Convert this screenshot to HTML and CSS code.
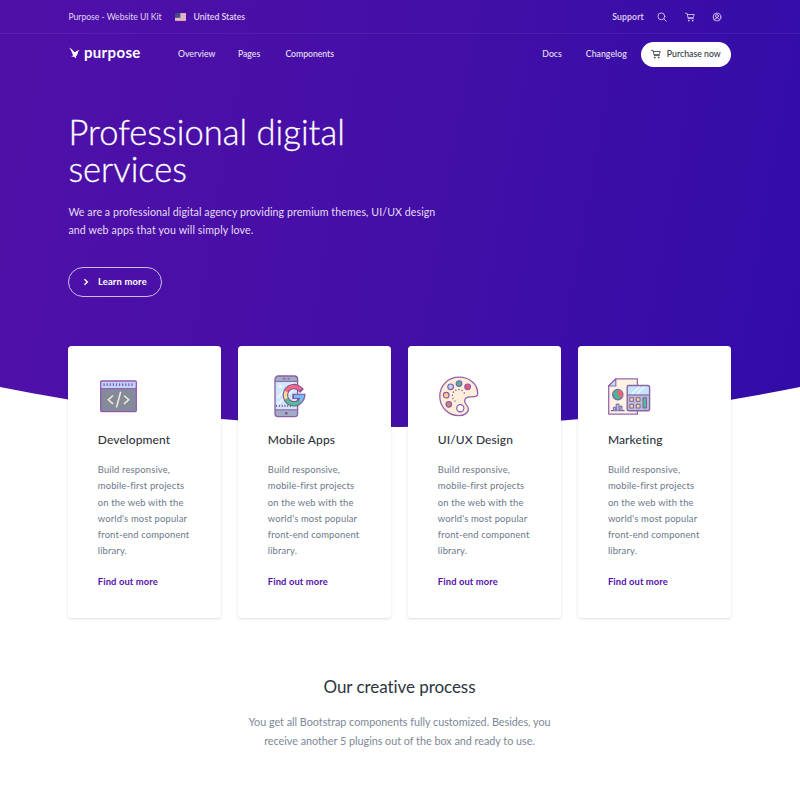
FILE: index.html
```html
<!DOCTYPE html>
<html lang="en">
<head>
<meta charset="utf-8">
<title>Purpose - Website UI Kit</title>
<link rel="stylesheet" href="styles.css">
</head>
<body>
<svg class="defs" aria-hidden="true">
  <symbol id="cart" viewBox="0 0 20 20"><path d="M1 2.6h3.2l2.3 10.6h10.7M4.8 5h13.7l-2.1 6.2L6.2 11.4" fill="none" stroke="currentColor" stroke-width="1.6" stroke-linecap="round" stroke-linejoin="round"/><circle cx="7.6" cy="17" r="1.7" fill="currentColor" stroke="none"/><circle cx="15.4" cy="17" r="1.7" fill="currentColor" stroke="none"/></symbol>
</svg>
<div class="hero">
  <svg class="curve" viewBox="0 0 800 60" preserveAspectRatio="none"><path d="M0 17Q400 97 800 17V60H0Z" fill="#fff"/></svg>
  <div class="topbar">
    <div class="container bar">
      <span class="tagline">Purpose - Website UI Kit</span>
      <svg class="flag" viewBox="0 0 11 8"><path fill="#d9a3b4" d="M0 0h11v8H0z"/><path d="M0 1.7h11M0 3.9h11M0 6.1h11" stroke="#f0d4dc" stroke-width=".7"/><path fill="#34477c" d="M0 0h5.3v4.7H0z"/><path d="M.8 1.2h4M.8 2.4h4M.8 3.6h4" stroke="#8190b4" stroke-width=".4" stroke-dasharray=".5 .6"/></svg>
      <span class="country">United States</span>
      <span class="support">Support</span>
      <svg class="ico search" viewBox="0 0 20 20"><circle cx="8.7" cy="8.7" r="6.8"/><path d="M13.7 13.7l4.8 4.8"/></svg>
      <svg class="ico cart"><use href="#cart"/></svg>
      <svg class="ico user" viewBox="0 0 20 20"><circle cx="10" cy="10" r="7.8"/><circle cx="10" cy="8" r="3"/><path d="M5 15.5c1-3 2.5-3.6 5-3.6s4 .6 5 3.6"/></svg>
    </div>
  </div>
  <div class="container nav">
    <svg class="mark" viewBox="0 0 11 12"><path fill="#fff" d="M0 .4C1.8 1.2 3.8 2.8 5.2 4.9L6.4 5.1C7.4 3.9 8.7 3.1 10.8 3C9.5 3.8 9.1 4.7 8.9 5.8C8.5 7.4 8.1 8.3 7 9.2L7.1 11.4L5.1 9.8L2.2 9.6L4.2 8.2C3.4 6.6 2.2 2.8 0 .4Z"/></svg>
    <span class="brand">purpose</span>
    <span class="overview">Overview</span><span class="pages">Pages</span><span class="components">Components</span>
    <span class="docs">Docs</span><span class="changelog">Changelog</span>
    <span class="purchase"><svg class="ico"><use href="#cart"/></svg>Purchase now</span>
  </div>
  <div class="container intro">
    <h1>Professional digital<br>services</h1>
    <p>We are a professional digital agency providing premium themes, UI/UX design<br><span class="wider">and web apps that you will simply love.</span></p>
    <a class="learn"><svg viewBox="0 0 6 8"><path d="M1.4 1.2L4.4 4L1.4 6.8"/></svg>Learn more</a>
  </div>
</div>
<div class="container cards">
  <div class="card">
    <svg class="art" viewBox="0 0 44 44"><rect x="2.7" y="7" width="35.6" height="30.6" rx="1" fill="#838b9b"/><path d="M2.7 7h35.6v7.3H2.7z" fill="#c4d3fb"/><path d="M5.5 10.6h31" stroke="#7b5bb0" stroke-width="2.6" stroke-dasharray="1.2 1.9"/><path d="M2.7 14.5h35.6" stroke="#9760b4" stroke-width="1.1"/><rect x="2.7" y="7" width="35.6" height="30.6" rx="1" fill="none" stroke="#9158b0" stroke-width="1.3"/><path d="M15 21.5l-4.7 4.2 4.7 4.2M26 21.5l4.7 4.2-4.7 4.2M22.7 17.8l-4.2 15.6" fill="none" stroke="#fbead6" stroke-width="1.5"/></svg>
    <h3>Development</h3>
    <p>Build responsive,<br>mobile-first projects<br>on the web with the<br>world's most popular<br>front-end component<br>library.</p><a>Find out more</a>
  </div>
  <div class="card">
    <svg class="art" viewBox="0 0 44 44"><rect x="7" y="2" width="22.6" height="40.6" rx="3.2" fill="#a5abc6"/><path d="M7 7.4h22.6v28.4H7z" fill="#cfe6fc"/><path d="M9 24L26 8M9 31L27 14" stroke="#eaf5ff" stroke-width="2"/><circle cx="12.4" cy="12.4" r="1.5" fill="#fff"/><path d="M8 31.8h15" stroke="#77579d" stroke-width="2.2" stroke-dasharray="1 1.8"/><path d="M7 7.4h22.6M7 35.8h22.6" stroke="#8660a2"/><rect x="7" y="2" width="22.6" height="40.6" rx="3.2" fill="none" stroke="#8660a2" stroke-width="1.3"/><path d="M14.7 4.8h3M19.6 4.8h2" stroke="#775092"/><circle cx="18.3" cy="39.2" r="1.3" fill="#775092"/><g fill="none"><path d="M32.1 15.1A8.6 8.6 0 1 0 34.5 22.4H27" stroke="#87519b" stroke-width="5.4" stroke-linecap="square"/><path d="M32.6 15.6A8.6 8.6 0 0 0 18.3 17.4" stroke="#f5697e" stroke-width="3.2"/><path d="M18.3 17.4A8.6 8.6 0 0 0 18.3 25" stroke="#fddc95" stroke-width="3.2"/><path d="M18.3 25A8.6 8.6 0 0 0 32.1 27.3" stroke="#4fbf94" stroke-width="3.2"/><path d="M32.1 27.3A8.6 8.6 0 0 0 34.5 22.4H26" stroke="#76bdf5" stroke-width="3.2"/></g></svg>
    <h3>Mobile Apps</h3>
    <p>Build responsive,<br>mobile-first projects<br>on the web with the<br>world's most popular<br>front-end component<br>library.</p><a>Find out more</a>
  </div>
  <div class="card">
    <svg class="art" viewBox="0 0 44 44"><path d="M21 3.2C9.8 3.2 1.8 12 1.8 22.5S10.4 41.7 20.6 41.7c5.5 0 9.8-2.7 9.8-6.8 0-3.4-3.7-4.3-3.7-7.7 0-3 2.4-4.4 5.7-4.4 4 0 7.3.2 7.3-3.3C39.7 9.8 31.3 3.2 21 3.2Z" fill="#fdefda" stroke="#9460ad" stroke-width="1.3"/><path d="M26.5 19.5A6.3 6.3 0 1 0 17.5 27.3" fill="none" stroke="#744f99" stroke-width="1.1" stroke-dasharray="1.3 1.9"/><g stroke="#8b5aa8" stroke-width="1.2"><circle cx="12.6" cy="12.8" r="2.8" fill="#b8dcfb"/><circle cx="21" cy="9.6" r="2.8" fill="#3dbf9b"/><circle cx="29.6" cy="12.8" r="2.8" fill="#f2556f"/><circle cx="8.2" cy="21.2" r="2.8" fill="#f8d088"/><circle cx="10.8" cy="30.3" r="2.8" fill="#cf7d7d"/><circle cx="22.3" cy="34.3" r="3.6" fill="#fff"/></g></svg>
    <h3>UI/UX Design</h3>
    <p>Build responsive,<br>mobile-first projects<br>on the web with the<br>world's most popular<br>front-end component<br>library.</p><a>Find out more</a>
  </div>
  <div class="card">
    <svg class="art" viewBox="0 0 44 44"><path d="M7.8 4.8H29.4V40.2H.7V12Z" fill="#fdf3e4" stroke="#9668ae" stroke-width="1.3" stroke-linejoin="round"/><path d="M7.8 4.8V12H.7Z" fill="#bfe0fb" stroke="#9668ae" stroke-width="1.2" stroke-linejoin="round"/><circle cx="9.8" cy="20.6" r="5.2" fill="#48b694" stroke="#87639c" stroke-width="1.2"/><path d="M9.8 20.6V15.8A4.8 4.8 0 0 1 13.6 23.7Z" fill="#f3607c"/><path d="M3 36.6h13.6" stroke="#7c5797" stroke-width="1.2"/><path d="M5.4 36.5v-3.2h2.4v3.2M8.2 36.5v-6.4h2.8v6.4M12 36.5v-4.4h2v4.4" fill="#adc6ee" stroke="#7c5797" stroke-width=".9"/><rect x="19.2" y="11.5" width="22.4" height="25.2" rx="1.5" fill="#b7bbd9"/><path d="M19.2 12h22.4v8.6H19.2z" fill="#c4e3fc"/><path d="M24 20l8-8M29 20l8-8" stroke="#e5f3ff" stroke-width="2"/><path d="M19.2 21h22.4" stroke="#8a65a4" stroke-width="1.1"/><rect x="19.2" y="11.5" width="22.4" height="25.2" rx="1.5" fill="none" stroke="#8a65a4" stroke-width="1.4"/><g stroke="#7c5797" stroke-width=".9"><path d="M21.8 23.7h3.6v3.6h-3.6zM28.4 23.7H32v3.6h-3.6zM21.8 30.4h3.6V34h-3.6zM28.4 30.4H32V34h-3.6z" fill="#fddb93"/><path d="M35 23.7h3.4V34H35z" fill="#4fbf94"/></g></svg>
    <h3>Marketing</h3>
    <p>Build responsive,<br>mobile-first projects<br>on the web with the<br>world's most popular<br>front-end component<br>library.</p><a>Find out more</a>
  </div>
</div>
<div class="process">
  <h2>Our creative process</h2>
  <p>You get all Bootstrap components fully customized. Besides, you<br>receive another 5 plugins out of the box and ready to use.</p>
</div>
</body>
</html>
```
FILE: styles.css
```css
* { box-sizing: border-box; }
body { margin: 0; width: 800px; height: 800px; overflow: hidden; background: #fff; font-family: Lato, "Liberation Sans", sans-serif; color: #2e3440; white-space: nowrap; font-variant-ligatures: none; }
h1, h2, h3, p { margin: 0; }
.defs { position: absolute; width: 0; height: 0; }
.container { width: 662.4px; margin: 0 auto 0 68.4px; }
.hero { position: relative; height: 430px; background: linear-gradient(100deg, #5010a8 0%, #450fa7 45%, #320ca8 100%); color: #fff; }
.curve { position: absolute; left: 0; bottom: 0; width: 800px; height: 60px; display: block; }
.topbar { height: 34px; border-bottom: 1px solid rgba(255,255,255,.06); font-size: 8.7px; }
.bar { display: flex; align-items: center; height: 33px; color: #e0d5f2; }
.tagline { width: 107px; letter-spacing: -.06px; }
.flag { width: 11px; height: 8px; margin-right: 7px; }
.country { font-weight: 600; }
.support { margin-left: auto; font-weight: 600; letter-spacing: .12px; }
.ico { width: 10px; height: 10px; fill: none; stroke: currentColor; stroke-width: 1.7; stroke-linecap: round; }
.search { margin-left: 13px; }
.cart { margin-left: 18px; }
.user { margin-left: 17px; margin-right: 9px; }
.nav { display: flex; align-items: center; height: 40px; font-size: 8.7px; font-weight: 500; line-height: 11px; color: #e9e1f6; }
.nav > span:not(.purchase):not(.brand) { padding-bottom: 2px; }
.mark { width: 11px; height: 12px; margin-left: 1px; margin-bottom: 3px; }
.brand { width: 94px; padding-left: 3.5px; font-size: 15px; line-height: 18px; font-weight: 700; color: #fff; letter-spacing: .36px; margin-top: -5px; }
.overview { width: 60px; margin-left: 3.5px; letter-spacing: .06px; }
.pages { width: 47.5px; }
.components { letter-spacing: -.03px; }
.docs { margin-left: auto; }
.changelog { margin: 0 14px 0 24px; letter-spacing: .06px; }
.purchase { display: flex; align-items: center; width: 90px; height: 25px; padding: 0 0 1px 10px; gap: 6px; border-radius: 13px; background: #fff; color: #2e3440; letter-spacing: .03px; }
.intro { padding-top: 38.6px; }
h1 { font-size: 34.5px; line-height: 37.5px; font-weight: 300; letter-spacing: .03px; -webkit-text-stroke: .3px #fff; }
.intro p { margin-top: 15.6px; font-size: 10.6px; line-height: 18px; letter-spacing: .084px; color: #e6ddf5; }
.wider { letter-spacing: .129px; }
.learn { display: flex; align-items: center; width: 94px; height: 30px; margin-top: 27.6px; padding-left: 14px; border: 1px solid #cdbde9; border-radius: 15px; font-size: 9.4px; font-weight: 700; letter-spacing: .19px; }
.learn svg { width: 6px; height: 8px; margin-right: 8.5px; fill: none; stroke: #fff; stroke-width: 1.4; }
.cards { position: relative; display: grid; grid-template-columns: repeat(4, 152.3px); justify-content: space-between; margin-top: -84px; }
.card { height: 272px; padding: 28px 0 0 29.4px; border-radius: 3.5px; background: #fff; box-shadow: 0 1px 2.5px rgba(31,45,61,.16); }
.art { display: block; width: 44px; height: 44px; }
h3 { margin-top: 14px; font-size: 12px; line-height: 16px; font-weight: 500; letter-spacing: .1px; }
.card p { margin-top: 14px; font-size: 9.4px; line-height: 16.25px; letter-spacing: .17px; color: #6b7888; }
.card a { display: block; margin-top: 14px; font-size: 9.4px; line-height: 16px; font-weight: 700; letter-spacing: .11px; color: #5210ad; }
.process { width: 799px; margin-top: 58px; text-align: center; }
h2 { font-size: 17px; line-height: 22px; font-weight: 400; letter-spacing: -.06px; }
.process p { margin-top: 14px; font-size: 10.8px; line-height: 19.4px; letter-spacing: -.018px; color: #7d8896; }
```
